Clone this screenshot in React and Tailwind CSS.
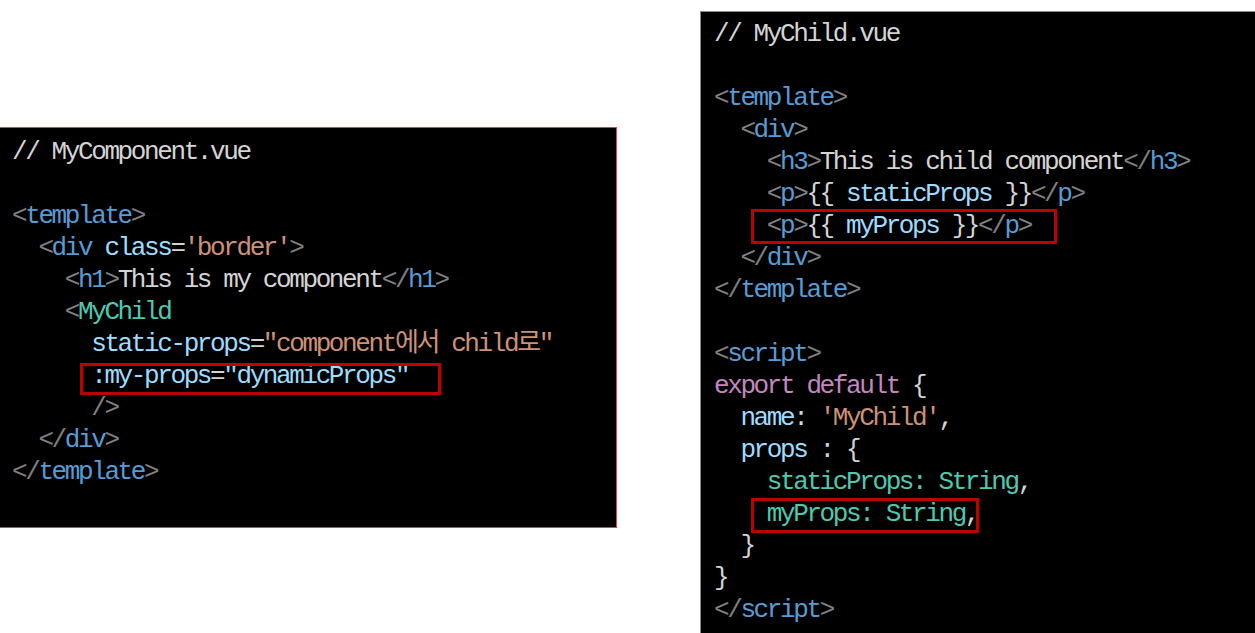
import React from 'react';

// token colours, VS Code dark style
const C = {
  t: 'text-[#d4d4d4]',
  g: 'text-[#808080]',
  b: 'text-[#569cd6]',
  a: 'text-[#9cdcfe]',
  s: 'text-[#ce9178]',
  c: 'text-[#4ec9b0]',
  k: 'text-[#c586c0]',
};

const leftLines = [
  { tokens: [['// MyComponent.vue', 't']] },
  { tokens: [] },
  { tokens: [['<', 'g'], ['template', 'b'], ['>', 'g']] },
  { tokens: [['  <', 'g'], ['div', 'b'], [' ', 't'], ['class', 'a'], ['=', 't'], ["'border'", 's'], ['>', 'g']] },
  { tokens: [['    <', 'g'], ['h1', 'b'], ['>', 'g'], ['This is my component', 't'], ['</', 'g'], ['h1', 'b'], ['>', 'g']] },
  { tokens: [['    <', 'g'], ['MyChild', 'c']] },
  { tokens: [['      static-props', 'a'], ['=', 't'], ['"component에서 child로"', 's']] },
  { tokens: [['      :my-props', 'a'], ['=', 't'], ['"dynamicProps"', 'a']], box: 'left-[68px] w-[361px] top-[3px] h-[32px]' },
  { tokens: [['      />', 'g']] },
  { tokens: [['  </', 'g'], ['div', 'b'], ['>', 'g']] },
  { tokens: [['</', 'g'], ['template', 'b'], ['>', 'g']] },
];

const rightLines = [
  { tokens: [['// MyChild.vue', 't']] },
  { tokens: [] },
  { tokens: [['<', 'g'], ['template', 'b'], ['>', 'g']] },
  { tokens: [['  <', 'g'], ['div', 'b'], ['>', 'g']] },
  { tokens: [['    <', 'g'], ['h3', 'b'], ['>', 'g'], ['This is child component', 't'], ['</', 'g'], ['h3', 'b'], ['>', 'g']] },
  { tokens: [['    <', 'g'], ['p', 'b'], ['>', 'g'], ['{{ ', 't'], ['staticProps', 'a'], [' }}', 't'], ['</', 'g'], ['p', 'b'], ['>', 'g']] },
  { tokens: [['    <', 'g'], ['p', 'b'], ['>', 'g'], ['{{ ', 't'], ['myProps', 'a'], [' }}', 't'], ['</', 'g'], ['p', 'b'], ['>', 'g']], box: 'left-[37px] w-[306px] top-[-1px] h-[35px]' },
  { tokens: [['  </', 'g'], ['div', 'b'], ['>', 'g']] },
  { tokens: [['</', 'g'], ['template', 'b'], ['>', 'g']] },
  { tokens: [] },
  { tokens: [['<', 'g'], ['script', 'b'], ['>', 'g']] },
  { tokens: [['export default', 'k'], [' {', 't']] },
  { tokens: [['  name', 'a'], [': ', 't'], ["'MyChild'", 's'], [',', 't']] },
  { tokens: [['  props', 'a'], [' : {', 't']] },
  { tokens: [['    staticProps: String', 'c'], [',', 't']] },
  { tokens: [['    myProps: String', 'c'], [',', 't']], box: 'left-[37px] w-[228px] top-[0px] h-[35px]' },
  { tokens: [['  }', 't']] },
  { tokens: [['}', 't']] },
  { tokens: [['</', 'g'], ['script', 'b'], ['>', 'g']] },
];

const CodeLine = ({ line }) => (
  <div className="relative h-[32px] leading-[32px] whitespace-pre">
    {line.tokens.map(([text, color], i) => (
      <span key={i} className={C[color]}>{text}</span>
    ))}
    {line.tokens.length === 0 && ' '}
    {line.box && (
      <span className={`absolute border-[3px] border-[#c00000] ${line.box}`} />
    )}
  </div>
);

const CodeBlock = ({ lines }) => (
  <div className="font-['Liberation_Mono','Noto_Sans_CJK_KR',monospace] text-[26px] tracking-[-2.4px]">
    {lines.map((line, i) => (
      <CodeLine key={i} line={line} />
    ))}
  </div>
);

export default function App() {
  return (
    <div className="w-[1255px] h-[633px] overflow-hidden bg-white flex items-start">
      {/* MyComponent.vue */}
      <div className="mt-[127px] w-[617px] h-[401px] shrink-0 bg-black border-t border-r border-b border-[#d04a4a] pl-3 pt-[8px]">
        <CodeBlock lines={leftLines} />
      </div>

      {/* MyChild.vue */}
      <div className="ml-[83px] mt-[11px] w-[560px] h-[640px] shrink-0 bg-black border-l border-t border-[#8a8a8a] pl-[13px] pt-[6px]">
        <CodeBlock lines={rightLines} />
      </div>
    </div>
  );
}
